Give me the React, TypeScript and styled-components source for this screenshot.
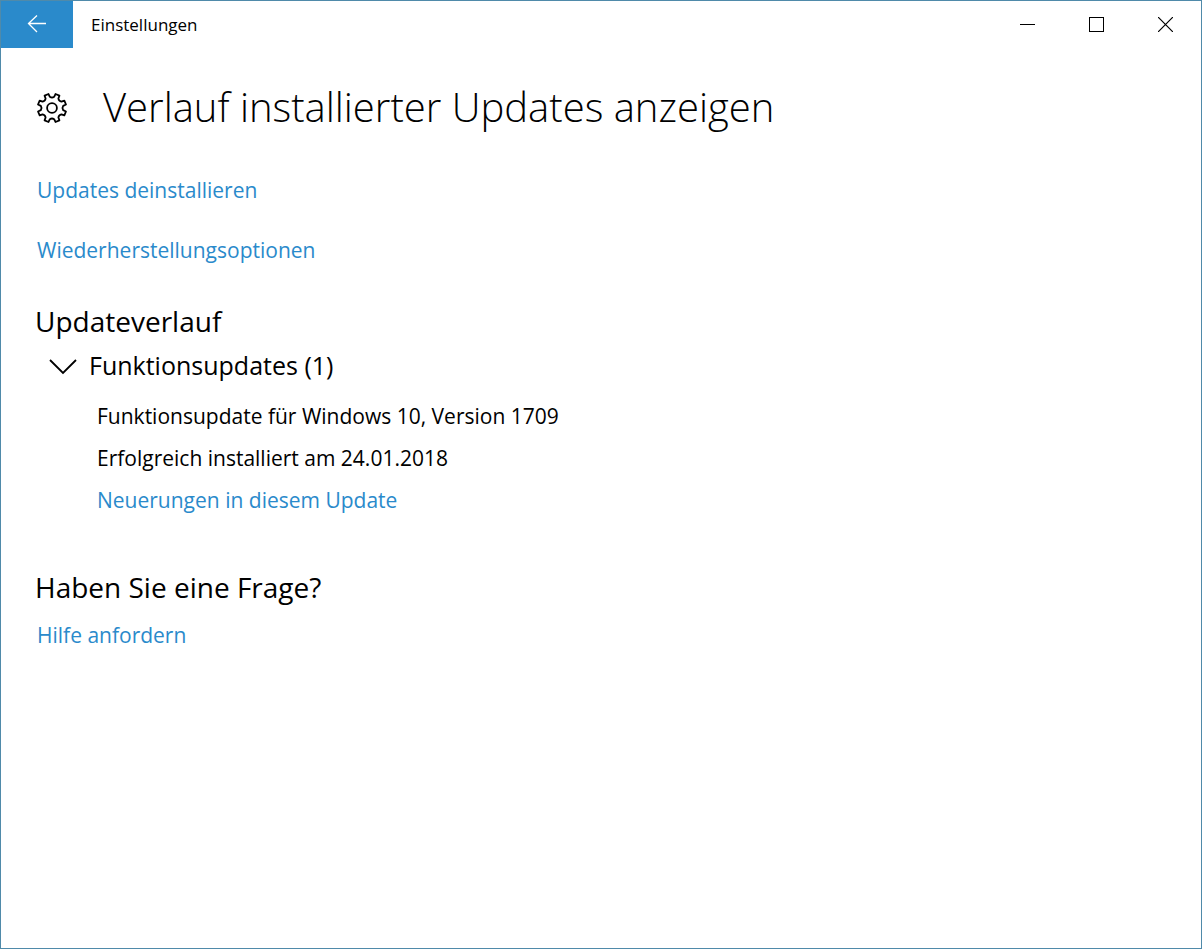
import React from "react";
import styled, { createGlobalStyle } from "styled-components";

const GlobalStyle = createGlobalStyle`
  *, *::before, *::after { box-sizing: border-box; }
  body {
    margin: 0;
    background: #fff;
    color: #000;
    font-family: "Segoe UI", "Open Sans", "Noto Sans", sans-serif;
  }
`;

const Window = styled.div`
  display: flex;
  flex-direction: column;
  min-height: 100vh;
  border: 1px solid #4f8aaa;
  background: #fff;
`;

const TitleBar = styled.header`
  display: flex;
  align-items: center;
  height: 47px;
  padding-right: 1px;
`;

const BackButton = styled.button`
  display: flex;
  align-items: center;
  justify-content: center;
  width: 72px;
  height: 47px;
  padding: 0;
  border: 0;
  background: #2a8acb;
  color: #fff;
`;

const WindowTitle = styled.span`
  flex: 1;
  padding-left: 18px;
  font-size: 17px;
  line-height: 24px;
`;

const CaptionButton = styled.button`
  display: flex;
  align-items: center;
  justify-content: center;
  width: 69px;
  height: 47px;
  padding: 0;
  border: 0;
  background: transparent;
  color: #000;
`;

const Content = styled.main`
  padding: 29px 34px;
`;

const PageHeader = styled.div`
  display: flex;
  align-items: center;
  gap: 34px;
`;

const PageTitle = styled.h1`
  margin: 0;
  font-size: 40px;
  font-weight: 300;
  line-height: 60px;
`;

const Links = styled.nav`
  display: flex;
  flex-direction: column;
  align-items: flex-start;
  gap: 28px;
  padding: 37px 2px 0;
`;

const TextLink = styled.a`
  color: #2a8acb;
  font-size: 21px;
  line-height: 32px;
  text-decoration: none;
`;

const Section = styled.section`
  padding-top: 35px;
`;

const SectionTitle = styled.h2`
  margin: 0;
  font-size: 28px;
  font-weight: 400;
  line-height: 40px;
`;

const GroupToggle = styled.button`
  display: flex;
  align-items: center;
  gap: 11px;
  margin-top: 4px;
  padding: 0 0 0 14px;
  border: 0;
  background: transparent;
  color: #000;
  font-family: inherit;
  font-size: 25px;
  line-height: 40px;
`;

const UpdateEntry = styled.div`
  display: flex;
  flex-direction: column;
  align-items: flex-start;
  gap: 10px;
  padding: 15px 0 16px 62px;
`;

const EntryText = styled.p`
  margin: 0;
  font-size: 21px;
  line-height: 32px;
`;

const HelpRow = styled.div`
  display: flex;
  padding: 12px 2px 0;
`;

function gearPath(teeth: number, outer: number, inner: number) {
  const step = (Math.PI * 2) / teeth;
  const point = (r: number, a: number) =>
    `${(16 + r * Math.cos(a)).toFixed(2)} ${(16 + r * Math.sin(a)).toFixed(2)}`;
  const parts: string[] = [];
  for (let i = 0; i < teeth; i++) {
    const a = step * (i + 0.5);
    parts.push(
      `${i ? "L" : "M"}${point(inner, a - step * 0.26)}`,
      `L${point(outer, a - step * 0.19)}`,
      `L${point(outer, a + step * 0.19)}`,
      `L${point(inner, a + step * 0.26)}`,
      `A3.8 3.8 0 0 0 ${point(inner, a + step * 0.74)}`
    );
  }
  return parts.join("") + "Z";
}

const GearIcon = () => (
  <svg width="34" height="34" viewBox="-1 -2 34 34" fill="none" stroke="currentColor" strokeWidth="1.8" strokeLinejoin="round" aria-hidden="true">
    <path d={gearPath(8, 14.4, 11.4)} />
    <circle cx="16" cy="16" r="4.9" />
  </svg>
);

export default function App() {
  return (
    <>
      <GlobalStyle />
      <Window>
        <TitleBar>
          <BackButton aria-label="Zurück">
            <svg width="20" height="20" viewBox="0 0 20 20" fill="none" stroke="currentColor" strokeWidth="1.3" aria-hidden="true">
              <path d="M19 8.500H1.500M10 0.500L1.500 8.500L10 17" />
            </svg>
          </BackButton>
          <WindowTitle>Einstellungen</WindowTitle>
          <CaptionButton aria-label="Minimieren">
            <svg width="15" height="15" shapeRendering="crispEdges" aria-hidden="true">
              <path d="M0 7.5H15" stroke="currentColor" />
            </svg>
          </CaptionButton>
          <CaptionButton aria-label="Maximieren">
            <svg width="15" height="15" shapeRendering="crispEdges" aria-hidden="true">
              <rect x="0.5" y="0.5" width="14" height="14" fill="none" stroke="currentColor" />
            </svg>
          </CaptionButton>
          <CaptionButton aria-label="Schließen">
            <svg width="15" height="15" aria-hidden="true">
              <path d="M0 0L15 15M15 0L0 15" stroke="currentColor" strokeWidth="1.2" />
            </svg>
          </CaptionButton>
        </TitleBar>
        <Content>
          <PageHeader>
            <GearIcon />
            <PageTitle>Verlauf installierter Updates anzeigen</PageTitle>
          </PageHeader>
          <Links>
            <TextLink href="#deinstallieren">Updates deinstallieren</TextLink>
            <TextLink href="#wiederherstellung">Wiederherstellungsoptionen</TextLink>
          </Links>
          <Section>
            <SectionTitle>Updateverlauf</SectionTitle>
            <GroupToggle aria-expanded="true">
              <svg width="29" height="20" viewBox="0 -4 29 20" fill="none" stroke="currentColor" strokeWidth="1.8" aria-hidden="true">
                <path d="M1 1L14 14L27 1" />
              </svg>
              Funktionsupdates (1)
            </GroupToggle>
            <UpdateEntry>
              <EntryText>Funktionsupdate für Windows 10, Version 1709</EntryText>
              <EntryText>Erfolgreich installiert am 24.01.2018</EntryText>
              <TextLink href="#neuerungen">Neuerungen in diesem Update</TextLink>
            </UpdateEntry>
          </Section>
          <Section>
            <SectionTitle>Haben Sie eine Frage?</SectionTitle>
            <HelpRow>
              <TextLink href="#hilfe">Hilfe anfordern</TextLink>
            </HelpRow>
          </Section>
        </Content>
      </Window>
    </>
  );
}
